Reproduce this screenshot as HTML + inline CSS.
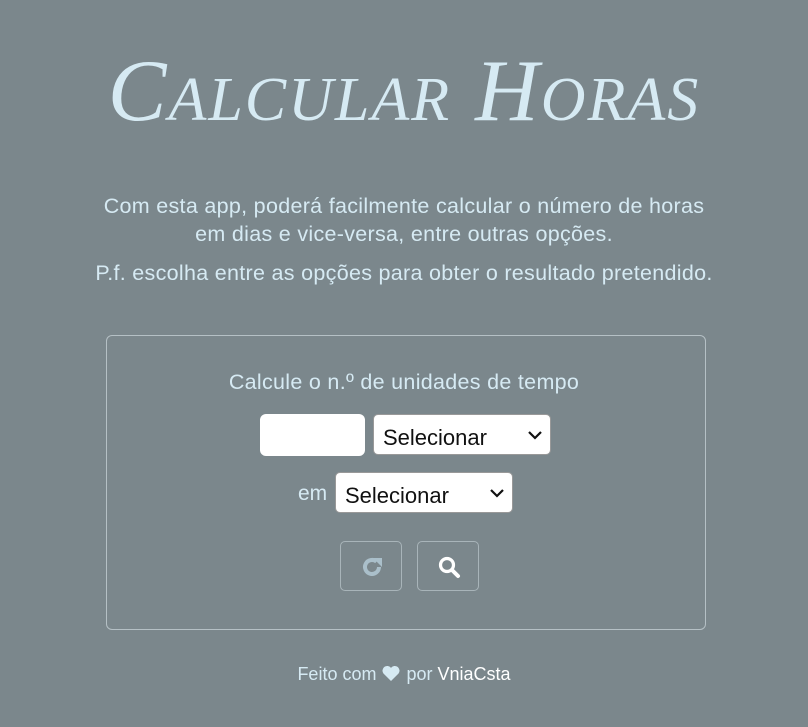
<!DOCTYPE html>
<html><head><meta charset="utf-8"><style>
html,body{margin:0;padding:0}
body{width:808px;height:727px;background:#7b878c;font-family:"Liberation Sans","DejaVu Sans",sans-serif;color:#d6eaf3;position:relative;overflow:hidden}
.t{position:absolute;left:0;width:808px;text-align:center}
h1{position:absolute;left:0;top:42px;width:808px;margin:0;text-align:center;font-family:"Liberation Serif",serif;font-style:italic;font-weight:normal;font-variant:small-caps;font-size:88px;letter-spacing:2px;color:#d6eaf3;line-height:100px}
p{margin:0;font-size:21.5px;letter-spacing:0.3px;line-height:28px}
.box{position:absolute;left:106px;top:335px;width:598px;height:293px;border:1px solid #b5c0c5;border-radius:6px}
.in{position:absolute;background:#fff;border-radius:6px}
.sel{position:absolute;background:#fff;border:1px solid #999;border-radius:5px;color:#111;font-size:22px;box-sizing:border-box;padding:10px 0 0 9px}
.sel svg{position:absolute;right:8px;top:16px}
.btn{position:absolute;width:62px;height:50px;border:1px solid #a8b4b9;border-radius:5px;box-sizing:border-box}
</style></head><body>
<h1>Calcular Horas</h1>
<div class="t" style="top:192px"><p>Com esta app, poderá facilmente calcular o número de horas<br>em dias e vice-versa, entre outras opções.</p></div>
<div class="t" style="top:259px"><p>P.f. escolha entre as opções para obter o resultado pretendido.</p></div>
<div class="box"></div>
<div class="t" style="top:368px"><p style="font-size:21.5px">Calcule o n.º de unidades de tempo</p></div>
<div class="in" style="left:260px;top:414px;width:105px;height:42px"></div>
<div class="sel" style="left:373px;top:414px;width:178px;height:41px">Selecionar<svg width="14" height="9" viewBox="0 0 14 9"><path d="M1 1l6 6 6-6" stroke="#111" stroke-width="2.2" fill="none"/></svg></div>
<div style="position:absolute;left:298px;top:482px;font-size:21px">em</div>
<div class="sel" style="left:335px;top:472px;width:178px;height:41px">Selecionar<svg width="14" height="9" viewBox="0 0 14 9"><path d="M1 1l6 6 6-6" stroke="#111" stroke-width="2.2" fill="none"/></svg></div>
<div class="btn" style="left:340px;top:541px"><svg style="position:absolute;left:19px;top:13px" width="24" height="24" viewBox="0 0 24 24"><path d="M19 12a7 7 0 1 1-2.5-5.4" stroke="#aabfca" stroke-width="4" fill="none"/><path d="M13 3h9v9z" fill="#aabfca"/></svg></div>
<div class="btn" style="left:417px;top:541px"><svg style="position:absolute;left:19px;top:13px" width="24" height="24" viewBox="0 0 24 24"><circle cx="10" cy="10" r="6.5" stroke="#fff" stroke-width="3.2" fill="none"/><path d="M15 15l6 6" stroke="#fff" stroke-width="4" stroke-linecap="round"/></svg></div>
<div class="t" style="top:664px;font-size:18px">Feito com <svg width="20" height="17" viewBox="0 0 20 18" style="vertical-align:-2px"><path d="M10 17L2 9a5 5 0 0 1 8-6 5 5 0 0 1 8 6z" fill="#d6eaf3"/></svg> por <span style="color:#fff">VniaCsta</span></div>
</body></html>
